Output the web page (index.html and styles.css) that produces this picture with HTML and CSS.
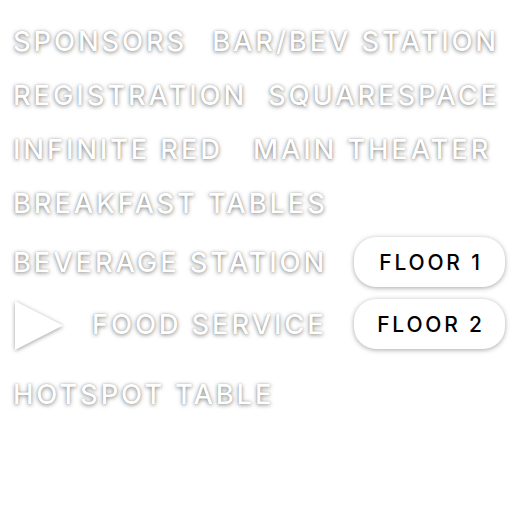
FILE: index.html
```html
<!DOCTYPE html>
<html>
<head>
<meta charset="utf-8">
<link rel="stylesheet" href="styles.css">
</head>
<body>
<div class="board">
  <div class="row"><span class="label">SPONSORS</span><span class="label gap-a">BAR/BEV STATION</span></div>
  <div class="row"><span class="label">REGISTRATION</span><span class="label gap-b">SQUARESPACE</span></div>
  <div class="row"><span class="label">INFINITE RED</span><span class="label gap-c">MAIN THEATER</span></div>
  <div class="row"><span class="label">BREAKFAST TABLES</span></div>
  <div class="row floor-row first">
    <span class="label">BEVERAGE STATION</span>
    <button class="floor-btn">FLOOR 1</button>
  </div>
  <div class="row floor-row second">
    <svg class="play" width="49" height="50" viewBox="0 0 49 50"><polygon points="0,0 48,24.5 0,49" fill="#fff"/></svg>
    <span class="label">FOOD SERVICE</span>
    <button class="floor-btn">FLOOR 2</button>
  </div>
  <div class="row last"><span class="label">HOTSPOT TABLE</span></div>
</div>
</body>
</html>
```
FILE: styles.css
```css
html, body {
  margin: 0;
  padding: 0;
  background: #ffffff;
}
.board {
  width: 512px;
  height: 512px;
  box-sizing: border-box;
  padding: 14px 7px 0 13px;
  display: flex;
  flex-direction: column;
  font-family: "Inter", "DejaVu Sans", sans-serif;
}
.row {
  display: flex;
  align-items: center;
  height: 54px;
  white-space: nowrap;
}
.label {
  font-size: 27.5px;
  font-weight: 500;
  line-height: 34px;
  letter-spacing: 2.8px;
  color: #ffffff;
  text-shadow: 0 1px 4px rgba(0, 0, 0, 0.5), 0 0 1px rgba(0, 0, 0, 0.25);
}
.gap-a { margin-left: 25px; }
.gap-b { margin-left: 21px; }
.gap-c { margin-left: 30px; }
.floor-row {
  height: 50px;
}
.floor-row.first { margin-top: 7px; }
.floor-row.second { margin-top: 12px; }
.last { margin-top: 18px; }
.floor-btn {
  margin-left: auto;
  width: 151px;
  height: 50px;
  border: none;
  border-radius: 22px;
  background: #ffffff;
  box-shadow: 0 1px 5px rgba(0, 0, 0, 0.35);
  font-family: "Inter", "DejaVu Sans", sans-serif;
  font-weight: 500;
  font-size: 21px;
  letter-spacing: 2.8px;
  padding: 0 0 0 3px;
  color: #000000;
}
.play {
  margin-left: 2px;
  margin-right: 28px;
  margin-top: 3px;
  filter: drop-shadow(0 1px 2px rgba(0, 0, 0, 0.4));
}
```
